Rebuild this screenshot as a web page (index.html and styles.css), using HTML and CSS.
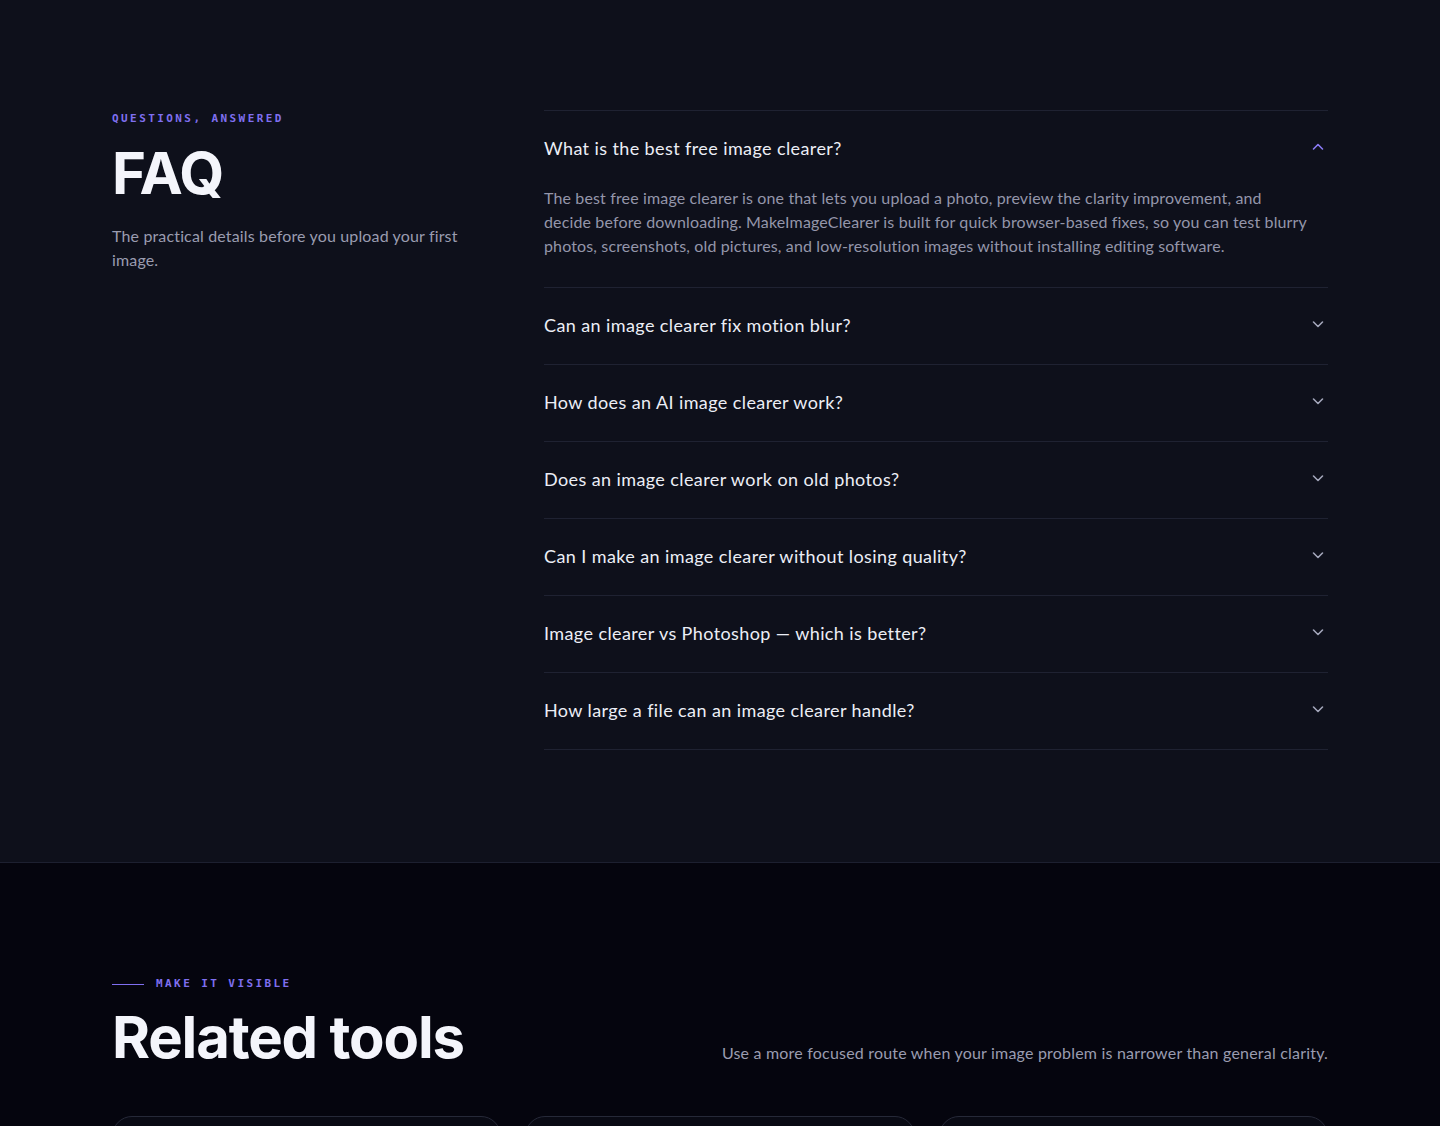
FILE: index.html
```html
<!DOCTYPE html>
<html lang="en">
<head>
<meta charset="utf-8">
<title>FAQ</title>
<link rel="stylesheet" href="styles.css">
</head>
<body>
<section class="faq">
  <div class="container faq-grid">
    <div class="faq-intro">
      <p class="eyebrow">QUESTIONS, ANSWERED</p>
      <h2 class="title">FAQ</h2>
      <p class="lead">The practical details before you upload your first image.</p>
    </div>
    <div class="faq-list">
      <div class="item open">
        <div class="q"><span>What is the best free image clearer?</span>
          <svg class="chev" viewBox="0 0 14 14" width="14" height="14"><path d="M2.5 9 L7 4.5 L11.5 9"/></svg>
        </div>
        <p class="a">The best free image clearer is one that lets you upload a photo, preview the clarity improvement, and decide before downloading. MakeImageClearer is built for quick browser-based fixes, so you can test blurry photos, screenshots, old pictures, and low-resolution images without installing editing software.</p>
      </div>
      <div class="item">
        <div class="q"><span>Can an image clearer fix motion blur?</span>
          <svg class="chev" viewBox="0 0 14 14" width="14" height="14"><path d="M2.5 5 L7 9.5 L11.5 5"/></svg>
        </div>
      </div>
      <div class="item">
        <div class="q"><span>How does an AI image clearer work?</span>
          <svg class="chev" viewBox="0 0 14 14" width="14" height="14"><path d="M2.5 5 L7 9.5 L11.5 5"/></svg>
        </div>
      </div>
      <div class="item">
        <div class="q"><span>Does an image clearer work on old photos?</span>
          <svg class="chev" viewBox="0 0 14 14" width="14" height="14"><path d="M2.5 5 L7 9.5 L11.5 5"/></svg>
        </div>
      </div>
      <div class="item">
        <div class="q"><span>Can I make an image clearer without losing quality?</span>
          <svg class="chev" viewBox="0 0 14 14" width="14" height="14"><path d="M2.5 5 L7 9.5 L11.5 5"/></svg>
        </div>
      </div>
      <div class="item">
        <div class="q"><span>Image clearer vs Photoshop — which is better?</span>
          <svg class="chev" viewBox="0 0 14 14" width="14" height="14"><path d="M2.5 5 L7 9.5 L11.5 5"/></svg>
        </div>
      </div>
      <div class="item">
        <div class="q"><span>How large a file can an image clearer handle?</span>
          <svg class="chev" viewBox="0 0 14 14" width="14" height="14"><path d="M2.5 5 L7 9.5 L11.5 5"/></svg>
        </div>
      </div>
    </div>
  </div>
</section>
<section class="related">
  <div class="container">
    <div class="related-head">
      <div>
        <p class="eyebrow lined"><span class="line"></span>MAKE IT VISIBLE</p>
        <h2 class="title">Related tools</h2>
      </div>
      <p class="related-sub">Use a more focused route when your image problem is narrower than general clarity.</p>
    </div>
    <div class="cards">
      <div class="card"></div>
      <div class="card"></div>
      <div class="card"></div>
    </div>
  </div>
</section>
</body>
</html>
```
FILE: styles.css
```css
* { box-sizing: border-box; }
html, body { margin: 0; padding: 0; }
body {
  background: #05050e;
  font-family: Lato, "Noto Sans", sans-serif;
  color: #e8e9f2;
  -webkit-font-smoothing: antialiased;
}
.container {
  width: 1216px;
  margin: 0 auto;
}
.faq {
  background: #0e101b;
  padding: 110px 0 112px;
  border-bottom: 1px solid #1d2030;
}
.faq-grid {
  display: grid;
  grid-template-columns: 368px 1fr;
  column-gap: 64px;
  align-items: start;
}
.eyebrow {
  margin: 0;
  padding-top: 1px;
  font-family: "DejaVu Sans Mono", "Liberation Mono", monospace;
  font-weight: bold;
  font-size: 11px;
  line-height: 16px;
  letter-spacing: 0.22em;
  color: #7f6ff0;
}
.title {
  margin: 17px 0 0;
  font-family: Inter, "Liberation Sans", sans-serif;
  font-weight: 700;
  font-size: 58px;
  line-height: 1;
  letter-spacing: -0.02em;
  color: #f4f5fb;
}
.lead {
  margin: 22px 0 0;
  font-size: 16px;
  line-height: 24px;
  letter-spacing: 0.15px;
  color: #9a9cb0;
}
.faq-list {
  border-top: 1px solid #1f2232;
}
.item {
  border-bottom: 1px solid #1f2232;
}
.q {
  display: flex;
  justify-content: space-between;
  align-items: center;
  padding: 25px 0 27px;
  font-size: 18px;
  line-height: 24px;
  letter-spacing: 0.4px;
  color: #eceef6;
}
.open .q { padding-bottom: 26px; }
.chev {
  flex: none;
  margin-right: 3px;
  margin-top: -3px;
  fill: none;
  stroke: #a3a6ba;
  stroke-width: 1.6;
  stroke-linecap: round;
  stroke-linejoin: round;
}
.open .chev { stroke: #8a7af5; margin-top: -2px; }
.a {
  margin: 0;
  max-width: 768px;
  padding: 0 0 29px;
  font-size: 16px;
  line-height: 24px;
  letter-spacing: 0.14px;
  color: #9496aa;
}
.related {
  padding: 112px 0 0;
  height: 263px;
  overflow: hidden;
}
.related-head {
  display: flex;
  justify-content: space-between;
  align-items: flex-end;
}
.related .title { margin-top: 16px; }
.lined {
  display: flex;
  align-items: center;
}
.line {
  display: inline-block;
  width: 32px;
  height: 1px;
  background: #7f6ff0;
  margin-right: 12px;
}
.related-sub {
  margin: 0 0 1px;
  font-size: 16px;
  line-height: 24px;
  letter-spacing: 0.2px;
  color: #9a9cb0;
}
.cards {
  margin-top: 50px;
  display: grid;
  grid-template-columns: repeat(3, 1fr);
  gap: 24px;
}
.card {
  height: 200px;
  border: 1px solid #262938;
  border-radius: 20px;
  background: #090a14;
}
```
